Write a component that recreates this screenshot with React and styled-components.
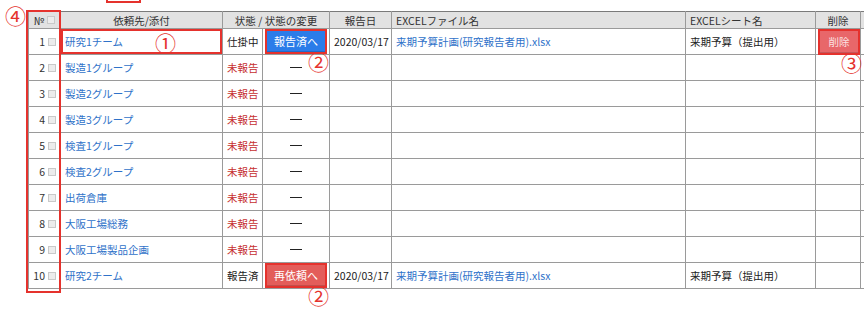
import React from "react";
import styled, { createGlobalStyle } from "styled-components";

const GlobalStyle = createGlobalStyle`
  body {
    margin: 0;
    background: #ffffff;
    font-family: "Noto Sans CJK JP", "Noto Sans", sans-serif;
    color: #222;
    overflow: hidden;
  }
`;

const colors = {
  grid: "#9a9a9a",
  head: "#e2e2e2",
  link: "#2f72c9",
  pending: "#c62f2f",
  mark: "#e5322d",
};

const Page = styled.div`
  position: relative;
  width: 864px;
  height: 318px;
  box-sizing: border-box;
  padding: 11px 0 0 28px;
  overflow: hidden;
`;

const Table = styled.table`
  border-collapse: collapse;
  table-layout: fixed;
  width: 892px;
  font-size: 10.5px;
`;

const Th = styled.th`
  height: 16px;
  padding: 0 4px;
  background: ${colors.head};
  border: 1px solid ${colors.grid};
  border-top-color: #7a7a7a;
  font-weight: normal;
  color: #333;
  white-space: nowrap;
  text-align: ${({ $align }) => $align || "center"};
`;

const Row = styled.tr`
  height: 26px;
`;

const Td = styled.td`
  position: relative;
  padding: 0 4px;
  border: 1px solid ${colors.grid};
  white-space: nowrap;
  text-align: ${({ $align }) => $align || "left"};
  color: ${({ $tone }) =>
    $tone === "link" ? colors.link : $tone === "pending" ? colors.pending : "#222"};
  box-shadow: ${({ $marked }) => ($marked ? `inset 0 0 0 2px ${colors.mark}` : "none")};
`;

const NoCell = styled.span`
  display: inline-flex;
  align-items: center;
  gap: 3px;
  color: #333;
`;

const Check = styled.span`
  display: inline-block;
  width: 6px;
  height: 6px;
  border: 1px solid #c9c9c9;
  background: #ececec;
`;

// wrapper for a control that carries a red callout number underneath
const Callout = styled.span`
  position: relative;
  display: inline-block;
  vertical-align: middle;
`;

const ActionButton = styled.span`
  display: block;
  width: 58px;
  height: 21px;
  line-height: 21px;
  text-align: center;
  font-size: 11px;
  color: #fff;
  background: ${({ $variant }) => ($variant === "blue" ? "#2b7ce9" : "#e35d5a")};
  box-shadow: inset 0 -1px 0 rgba(0, 0, 0, 0.15);
  outline: 2px solid ${colors.mark};
`;

const DeleteButton = styled(ActionButton)`
  width: 38px;
  height: 22px;
  line-height: 22px;
  font-size: 10.5px;
  color: #fbe3e3;
  background: #e8676a;
`;

const Dash = styled.span`
  display: inline-block;
  width: 12px;
  height: 1px;
  margin-bottom: 3px;
  background: #222;
  vertical-align: middle;
`;

// circled callout numbers (annotations drawn over the screenshot)
const Num = styled.span`
  position: absolute;
  font-size: 21px;
  line-height: 1;
  font-weight: normal;
  color: ${colors.mark};
  pointer-events: none;
  ${({ $at }) =>
    $at === "below"
      ? "top: 100%; right: -4px; margin-top: -1px;"
      : $at === "cell"
      ? "top: 50%; left: 94px; transform: translateY(-50%);"
      : "top: 0; left: 0;"}
`;

const ColumnMark = styled.div`
  position: absolute;
  left: 26px;
  top: 10px;
  width: 35px;
  height: 283px;
  border: 2px solid ${colors.mark};
  box-sizing: border-box;
  pointer-events: none;
`;

const TopMark = styled(ColumnMark)`
  left: 106px;
  top: -10px;
  height: 13px;
`;

const CornerNum = styled(Num)`
  left: 5px;
  top: 5px;
`;

const groups = [
  { name: "研究1チーム", state: "仕掛中", action: "blue", date: "2020/03/17", file: "来期予算計画(研究報告者用).xlsx", sheet: "来期予算（提出用）", del: true },
  { name: "製造1グループ", state: "未報告" },
  { name: "製造2グループ", state: "未報告" },
  { name: "製造3グループ", state: "未報告" },
  { name: "検査1グループ", state: "未報告" },
  { name: "検査2グループ", state: "未報告" },
  { name: "出荷倉庫", state: "未報告" },
  { name: "大阪工場総務", state: "未報告" },
  { name: "大阪工場製品企画", state: "未報告" },
  { name: "研究2チーム", state: "報告済", action: "red", date: "2020/03/17", file: "来期予算計画(研究報告者用).xlsx", sheet: "来期予算（提出用）" },
];

const widths = [32, 162, 40, 67, 62, 294, 130, 45, 60];

export default function App() {
  return (
    <>
      <GlobalStyle />
      <Page>
        <Table>
          <colgroup>
            {widths.map((w, i) => (
              <col key={i} style={{ width: w }} />
            ))}
          </colgroup>
          <thead>
            <tr>
              <Th>
                <NoCell>№<Check /></NoCell>
              </Th>
              <Th>依頼先/添付</Th>
              <Th colSpan={2}>状態 / 状態の変更</Th>
              <Th>報告日</Th>
              <Th $align="left">EXCELファイル名</Th>
              <Th $align="left">EXCELシート名</Th>
              <Th>削除</Th>
              <Th />
            </tr>
          </thead>
          <tbody>
            {groups.map((g, i) => (
              <Row key={g.name}>
                <Td $align="right">
                  <NoCell>{i + 1}<Check /></NoCell>
                </Td>
                <Td $tone="link" $marked={i === 0}>
                  {g.name}
                  {i === 0 && <Num $at="cell">①</Num>}
                </Td>
                <Td $tone={g.state === "未報告" ? "pending" : undefined} $align="center">
                  {g.state}
                </Td>
                <Td $align="center">
                  {g.action ? (
                    <Callout>
                      <ActionButton $variant={g.action}>
                        {g.action === "blue" ? "報告済へ" : "再依頼へ"}
                      </ActionButton>
                      <Num $at="below">②</Num>
                    </Callout>
                  ) : (
                    <Dash />
                  )}
                </Td>
                <Td $align="center">{g.date}</Td>
                <Td $tone="link">{g.file}</Td>
                <Td>{g.sheet}</Td>
                <Td $align="center">
                  {g.del && (
                    <Callout>
                      <DeleteButton>削除</DeleteButton>
                      <Num $at="below">③</Num>
                    </Callout>
                  )}
                </Td>
                <Td />
              </Row>
            ))}
          </tbody>
        </Table>

        <TopMark />
        <ColumnMark />
        <CornerNum>④</CornerNum>
      </Page>
    </>
  );
}
